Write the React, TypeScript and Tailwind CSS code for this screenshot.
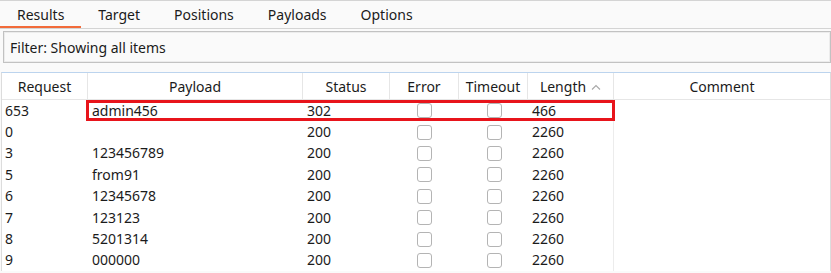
const tabs = ["Results", "Target", "Positions", "Payloads", "Options"];

const rows = [
  { req: "653", payload: "admin456", status: "302", length: "466" },
  { req: "0", payload: "", status: "200", length: "2260" },
  { req: "3", payload: "123456789", status: "200", length: "2260" },
  { req: "5", payload: "from91", status: "200", length: "2260" },
  { req: "6", payload: "12345678", status: "200", length: "2260" },
  { req: "7", payload: "123123", status: "200", length: "2260" },
  { req: "8", payload: "5201314", status: "200", length: "2260" },
  { req: "9", payload: "000000", status: "200", length: "2260" },
];

const cols = "grid grid-cols-[86px_215px_87px_69px_69px_86px_1fr]";

function Checkbox() {
  return (
    <div className="w-[15px] h-[15px] rounded-[3px] border border-[#b4b4b4] bg-white" />
  );
}

function HeaderCell({ label, sort }: { label: string; sort?: boolean }) {
  return (
    <div className="flex items-center justify-center gap-[5px] border-r border-[#e6e6e6] last:border-r-0">
      <span>{label}</span>
      {sort && (
        <svg width="10" height="6" viewBox="0 0 10 6" className="mt-[1px]">
          <path d="M1 5.5 L5 1.5 L9 5.5" fill="none" stroke="#a8a8a8" strokeWidth="1.1" />
        </svg>
      )}
    </div>
  );
}

export default function App() {
  return (
    <div
      className="w-[831px] h-[273px] overflow-hidden bg-[#fafafa] text-[#1b1b1b] text-[14px]"
      style={{ fontFamily: '"Noto Sans", "Open Sans", sans-serif' }}
    >
      {/* TABS */}
      <div className="flex h-[29px] border-t border-b border-[#d4d4d4]">
        {tabs.map((t, i) => (
          <div
            key={t}
            className={
              i === 0
                ? "px-[17px] flex items-center border-b-2 border-[#f26b3a] pt-[1px]"
                : "px-[17px] flex items-center pb-[1px]"
            }
          >
            {t}
          </div>
        ))}
      </div>

      {/* FILTER */}
      <div className="mt-[2px] ml-[3px] h-[32px] border border-[#c2c2c2] bg-[#fafafa] flex items-center px-[6px] shadow-[inset_0_0_0_1px_#ececec]">
        Filter: Showing all items
      </div>

      {/* TABLE */}
      <div className="relative mt-[9px] ml-[1px] border-l border-r border-t border-[#dcdcdc] border-t-[#bcd4ee] bg-white">
        <div className={`${cols} h-[27px] border-b border-[#e6e6e6]`}>
          <HeaderCell label="Request" />
          <HeaderCell label="Payload" />
          <HeaderCell label="Status" />
          <HeaderCell label="Error" />
          <HeaderCell label="Timeout" />
          <HeaderCell label="Length" sort />
          <HeaderCell label="Comment" />
        </div>

        {rows.map((r) => (
          <div key={r.req} className={`${cols} h-[21.4px] leading-none`}>
            <div className="flex items-center pl-[3px]">{r.req}</div>
            <div className="flex items-center pl-[4px]">{r.payload}</div>
            <div className="flex items-center pl-[4px]">{r.status}</div>
            <div className="flex items-center justify-center">
              <Checkbox />
            </div>
            <div className="flex items-center justify-center pl-[2px]">
              <Checkbox />
            </div>
            <div className="flex items-center pl-[4px] border-r border-[#ececec]">{r.length}</div>
            <div />
          </div>
        ))}

        {/* highlight annotation */}
        <div className="absolute left-[84px] top-[27px] w-[529px] h-[21px] border-[3px] border-[#e8141b] pointer-events-none" />
      </div>
    </div>
  );
}
